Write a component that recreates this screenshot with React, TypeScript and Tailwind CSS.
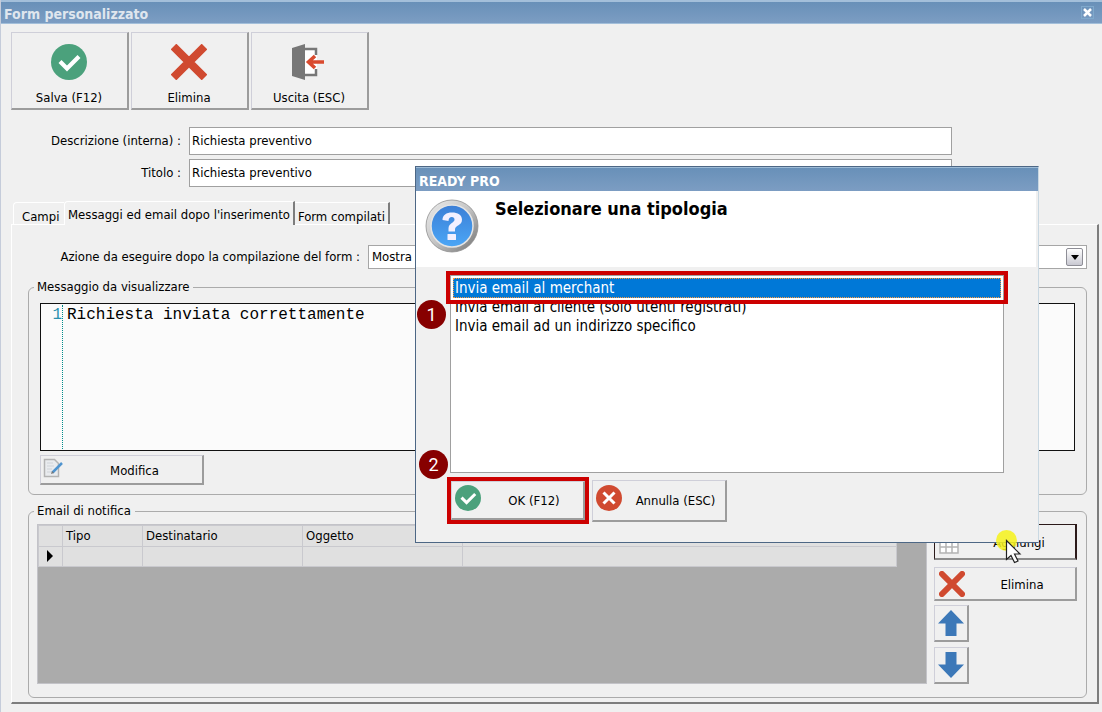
import type { ReactNode } from "react";

const raised =
  "border-t border-l border-r-2 border-b-2 border-t-[#cfcfd9] border-l-[#cfcfd9] border-r-[#9c9c9c] border-b-[#9c9c9c] bg-[#f0f0f0]";

function CheckIcon({ className }: { className: string }) {
  return (
    <svg viewBox="0 0 36 36" className={className} aria-hidden="true">
      <circle cx="18" cy="18" r="18" fill="#4ba17c" />
      <path d="M9 17.500l7 7L28 12.500" fill="none" stroke="#fff" strokeWidth="4.200" />
    </svg>
  );
}

function CrossIcon({ className, round }: { className: string; round?: boolean }) {
  return (
    <svg viewBox="0 0 36 36" className={className} aria-hidden="true">
      <path
        d={round ? "M4 4L32 32M32 4L4 32" : "M2.500 2.500L33.500 33.500M33.500 2.500L2.500 33.500"}
        stroke="#d04a30"
        strokeWidth="8"
        strokeLinecap={round ? "round" : "butt"}
      />
    </svg>
  );
}

function CancelIcon({ className }: { className: string }) {
  return (
    <svg viewBox="0 0 26 26" className={className} aria-hidden="true">
      <circle cx="13" cy="13" r="13" fill="#d04a30" />
      <path d="M7.500 7.500l11 11M18.500 7.500l-11 11" stroke="#fff" strokeWidth="3" />
    </svg>
  );
}

function ExitIcon({ className }: { className: string }) {
  return (
    <svg viewBox="0 0 36 36" className={className} aria-hidden="true">
      <path d="M14 4h12v28H14z" fill="#fff" />
      <path d="M14 5h11v6M14 31h11v-6" fill="none" stroke="#777" strokeWidth="2.500" />
      <path d="M1 4L14 0v36L1 32z" fill="#777" />
      <path d="M33 18H18M24 12l-6.500 6 6.500 6" fill="none" stroke="#d94a2e" strokeWidth="3.600" />
    </svg>
  );
}

function EditIcon({ className }: { className: string }) {
  return (
    <svg viewBox="0 0 20 20" className={className} aria-hidden="true">
      <path d="M1.500 1.500h10l4 4v13h-14z" fill="#e9ebee" stroke="#b3b3b3" strokeWidth="1.500" />
      <path d="M4 5h6M4 8h7M4 11h5M4 14h8" stroke="#cfd3d8" />
      <path d="M9.500 14.500l9.500-9.500" stroke="#4f94cf" strokeWidth="2.500" />
      <path d="M8 16l1-3 2 2z" fill="#777" />
    </svg>
  );
}

function TableIcon({ className }: { className: string }) {
  return (
    <svg viewBox="0 0 20 20" className={className} aria-hidden="true">
      <path
        d="M1 1h18v18H1zM1 7h18M1 13h18M7 1v18M13 1v18"
        fill="#fff"
        stroke="#b4b4b4"
        strokeWidth="1.500"
      />
    </svg>
  );
}

function ArrowIcon({ className }: { className: string }) {
  return (
    <svg viewBox="0 0 26 26" className={className} aria-hidden="true">
      <path d="M13 0L26 13.500H18.500V26h-11V13.500H0z" fill="#3c78b8" />
    </svg>
  );
}

function QuestionIcon({ className }: { className: string }) {
  return (
    <svg viewBox="0 0 54 54" className={className} aria-hidden="true">
      <defs>
        <linearGradient id="rim" x1="0" y1="0" x2="1" y2="1">
          <stop offset="0" stopColor="#eeeeee" />
          <stop offset="0.500" stopColor="#c4c4c4" />
          <stop offset="1" stopColor="#6f6f6f" />
        </linearGradient>
        <linearGradient id="ball" x1="0" y1="0" x2="0" y2="1">
          <stop offset="0" stopColor="#3c7fd6" />
          <stop offset="1" stopColor="#4ba6f6" />
        </linearGradient>
      </defs>
      <circle cx="27" cy="27" r="26" fill="url(#rim)" stroke="#909090" strokeWidth="0.800" />
      <circle cx="27" cy="27" r="21" fill="url(#ball)" stroke="#e4e4e4" strokeWidth="1.500" />
      <path
        d="M17.500 21c0-5 3.800-7.500 9.500-7.500s10 2.500 10 7.200c0 6-7 5.300-7 9.800v2h-6.500v-3c0-5.500 6-5.500 6-9 0-1.800-1-2.600-2.600-2.600-2.200 0-3.200 1.300-3.400 4z"
        fill="#f3f0ff"
      />
      <rect x="22.500" y="35" width="8.500" height="6" rx="0.500" fill="#f3f0ff" />
    </svg>
  );
}

function ToolButton({ icon, label }: { icon: ReactNode; label: string }) {
  return (
    <button className={`${raised} flex h-[78px] w-[118px] flex-col items-center justify-between pt-[11px] pr-px pb-[2px]`}>
      {icon}
      <span className="leading-4">{label}</span>
    </button>
  );
}

function SideButton({ icon, label, className }: { icon: ReactNode; label: string; className: string }) {
  return (
    <button className={`${className} flex items-center`}>
      {icon}
      <span className="grow pt-[2px] pl-1 text-center leading-4">{label}</span>
    </button>
  );
}

function TextRow({ id, label }: { id: string; label: string }) {
  return (
    <div className="flex items-center">
      <label htmlFor={id} className="w-[180px] text-right">
        {label}
      </label>
      <input
        id={id}
        defaultValue="Richiesta preventivo"
        className="ml-2 h-7 w-[763px] border border-[#a0a0a0] bg-white px-[2px] pb-[2px] outline-none"
      />
    </div>
  );
}

const fieldset = "mx-4 rounded-md border border-[#ababab]";
const legend = "ml-[5px] pr-1 pl-[3px] leading-4";
const headCell = "border border-[#c9c9ce] px-[3px] text-left font-normal";
const bodyCell = "border border-[#c9c9ce]";
const badge =
  "absolute flex size-[29px] items-center justify-center rounded-full bg-[#870000] font-[Roboto] text-[18px] text-white";

const options = [
  "Invia email al merchant",
  "Invia email al cliente (solo utenti registrati)",
  "Invia email ad un indirizzo specifico",
];

function Dialog() {
  return (
    <section
      role="dialog"
      aria-labelledby="dialog-title"
      className="absolute top-[166px] left-[414px] w-[624px] border border-[#4d6785] border-r-[#c9d8e2] bg-[#f0f0f0] pb-[18px]"
    >
      <div className="flex h-6 items-center border-t border-[#9dbbd6] bg-linear-to-b from-[#6890b8] to-[#7c9dc3] px-[3px] pt-1 text-[14px] font-bold text-white">
        READY PRO
      </div>
      <div className="mr-[2px] flex h-[76px] gap-4 bg-white pt-2 pl-[9px]">
        <QuestionIcon className="size-[54px]" />
        <h2 id="dialog-title" className="text-[18px] leading-5 font-bold">
          Selezionare una tipologia
        </h2>
      </div>
      <div className="relative mt-2 mr-[34px] ml-[34px]">
        <ul
          role="listbox"
          aria-label="Tipologia"
          className="h-[198px] border border-[#a0a0a0] bg-white p-[2px] text-[15px] leading-[19px]"
        >
          {options.map((text, i) => (
            <li
              key={text}
              role="option"
              aria-selected={i === 0}
              className={
                i === 0
                  ? "border border-dotted border-[#ff9a3c] bg-[#0078d7] px-px leading-[18px] text-white"
                  : "px-[2px]"
              }
            >
              {text}
            </li>
          ))}
        </ul>
        <div className="absolute -top-1 -right-[4px] -left-[4px] h-[33px] border-4 border-[#cc0000]" />
        <span className={`${badge} top-[25px] -left-[33px]`}>1</span>
        <span className={`${badge} top-[175px] -left-[31px]`}>2</span>
      </div>
      <div className="mt-1 ml-[31px] flex items-center gap-[3px]">
        <div className="border-4 border-[#cc0000]">
          <SideButton
            className={`${raised} h-[39px] w-[134px] pl-[3px]`}
            icon={<CheckIcon className="mb-1 size-[26px]" />}
            label="OK (F12)"
          />
        </div>
        <SideButton
          className={`${raised} h-[42px] w-[135px] pl-[3px]`}
          icon={<CancelIcon className="mb-1 size-[26px]" />}
          label="Annulla (ESC)"
        />
      </div>
    </section>
  );
}

export default function App() {
  return (
    <div className="relative flex min-h-screen flex-col border-l border-[#c5ccda] bg-[#f0f0f0] pb-2 font-['DejaVu_Sans_Condensed','DejaVu_Sans',sans-serif] text-[13px] text-black">
      <header className="flex h-6 items-center justify-between border-t-2 border-b border-[#a3bfda] bg-linear-to-b from-[#6890b8] to-[#7c9dc3] pr-2 pl-[3px] text-[14px] font-bold text-[#dfe6ee]">
        <h1 className="pt-1">Form personalizzato</h1>
        <button aria-label="Chiudi" className="flex size-[13px] items-center justify-center border border-[#7fa9cc]">
          <svg viewBox="0 0 9 9" className="size-[9px]" aria-hidden="true">
            <path d="M1 1l7 7M8 1L1 8" stroke="#fff" strokeWidth="2.500" />
          </svg>
        </button>
      </header>

      <div className="mt-2 ml-[10px] flex gap-[2px]">
        <ToolButton icon={<CheckIcon className="size-9" />} label="Salva (F12)" />
        <ToolButton icon={<CrossIcon className="size-9" />} label="Elimina" />
        <ToolButton icon={<ExitIcon className="size-9" />} label="Uscita (ESC)" />
      </div>

      <div className="mt-[17px] flex flex-col gap-1">
        <TextRow id="descrizione" label="Descrizione (interna) :" />
        <TextRow id="titolo" label="Titolo :" />
      </div>

      <div role="tablist" className="mt-[14px] ml-3 flex items-end">
        <button role="tab" className="h-[22px] w-[51px] rounded-tl border-t border-l border-white pt-1 pl-2 text-left">
          Campi
        </button>
        <button
          role="tab"
          aria-selected="true"
          className="relative z-10 -mb-px h-6 rounded-tl border-t border-r-2 border-l border-t-white border-r-[#7d7d7d] border-l-white bg-[#f0f0f0] px-[3px] pt-[2px]"
        >
          Messaggi ed email dopo l'inserimento
        </button>
        <button role="tab" className="h-[22px] border-t border-r-2 border-t-white border-r-[#7d7d7d] px-[3px] pt-1">
          Form compilati
        </button>
      </div>

      <main className="mr-[3px] ml-[10px] flex grow flex-col border-t border-r-2 border-b-2 border-l border-t-white border-r-[#7d7d7d] border-b-[#7d7d7d] border-l-white pt-5 pb-1">
        <div className="mr-[10px] flex items-center">
          <label htmlFor="azione" className="w-[348px] text-right">
            Azione da eseguire dopo la compilazione del form :
          </label>
          <div className="ml-2 flex h-6 grow items-center border border-[#a6a6a6] bg-white pr-[3px]">
            <select id="azione" className="grow appearance-none pl-[3px] outline-none">
              <option>Mostra</option>
            </select>
            <span className="flex h-[18px] w-[17px] items-center justify-center rounded-xs border border-[#8e8e96] bg-linear-to-b from-white to-[#c9c9d2]">
              <svg viewBox="0 0 8 5" className="h-[5px] w-2" aria-hidden="true">
                <path d="M0 0h8L4 5z" />
              </svg>
            </span>
          </div>
        </div>

        <fieldset className={`${fieldset} mt-[10px] mr-[10px] pb-[9px]`}>
          <legend className={legend}>Messaggio da visualizzare</legend>
          <div className="mt-2 mr-[11px] ml-[11px] flex h-[148px] border border-[#111111] bg-[#fbfbfb] font-['Liberation_Mono',monospace] text-[16px] leading-5">
            <span className="my-px w-[22px] border-r border-dotted border-[#008b8b] text-right text-[#2b91af]">1</span>
            <textarea
              aria-label="Messaggio"
              defaultValue="Richiesta inviata correttamente"
              className="mt-px grow resize-none pl-1 outline-none"
            />
          </div>
          <SideButton
            className={`${raised} mt-1 ml-[11px] h-[30px] w-[164px] pl-[2px]`}
            icon={<EditIcon className="mb-1 size-5" />}
            label="Modifica"
          />
        </fieldset>

        <fieldset className={`${fieldset} mt-2 mr-[10px] flex grow flex-col`}>
          <legend className={legend}>Email di notifica</legend>
          <div className="mr-[9px] ml-2 flex grow gap-[7px] pt-[5px] pb-[11px]">
            <div className="grow border border-[#c3c3c8] bg-[#ababab] pr-[29px]">
              <table className="w-full table-fixed border-collapse bg-[#e0e0e0]">
                <thead>
                  <tr className="h-5">
                    <th aria-label="Riga" className={`${headCell} w-6`} />
                    <th className={`${headCell} w-20`}>Tipo</th>
                    <th className={`${headCell} w-40`}>Destinatario</th>
                    <th className={`${headCell} w-40`}>Oggetto</th>
                    <th aria-label="Altro" className={headCell} />
                  </tr>
                </thead>
                <tbody>
                  <tr className="h-5">
                    <td className={bodyCell}>
                      <svg viewBox="0 0 6 12" className="ml-2 h-[12px] w-[6px]" aria-hidden="true">
                        <path d="M0 0l6 6-6 6z" />
                      </svg>
                    </td>
                    <td className={bodyCell} />
                    <td className={bodyCell} />
                    <td className={bodyCell} />
                    <td className={bodyCell} />
                  </tr>
                </tbody>
              </table>
            </div>
            <div className="flex w-[143px] shrink-0 flex-col">
              <SideButton
                className="h-9 border-t border-r-2 border-b-2 border-l border-t-[#2b1a1a] border-r-[#2b1a1a] border-b-[#8c8c8c] border-l-[#2b1a1a] pl-1"
                icon={<TableIcon className="mt-1 size-5" />}
                label="Aggiungi"
              />
              <SideButton
                className={`${raised} mt-[7px] h-[34px] pl-1`}
                icon={<CrossIcon round className="size-[26px]" />}
                label="Elimina"
              />
              <button aria-label="Sposta su" className={`${raised} mt-1 h-[37px] w-[35px] pl-[3px]`}>
                <ArrowIcon className="size-[26px]" />
              </button>
              <button aria-label="Sposta giù" className={`${raised} mt-[5px] h-[37px] w-[35px] pl-[3px]`}>
                <ArrowIcon className="size-[26px] rotate-180" />
              </button>
            </div>
          </div>
        </fieldset>
      </main>

      <Dialog />

      <svg viewBox="0 0 28 36" className="absolute top-[529px] left-[993px] h-9 w-7" aria-hidden="true">
        <circle cx="12.500" cy="11.500" r="10.500" fill="#f6f21a" fillOpacity="0.850" />
        <path
          d="M12.500 11.500v19l4.500-4 3.500 7 3.500-1.500-3.500-7h5.500z"
          fill="#fff"
          stroke="#222"
          strokeWidth="1.200"
        />
      </svg>
    </div>
  );
}
